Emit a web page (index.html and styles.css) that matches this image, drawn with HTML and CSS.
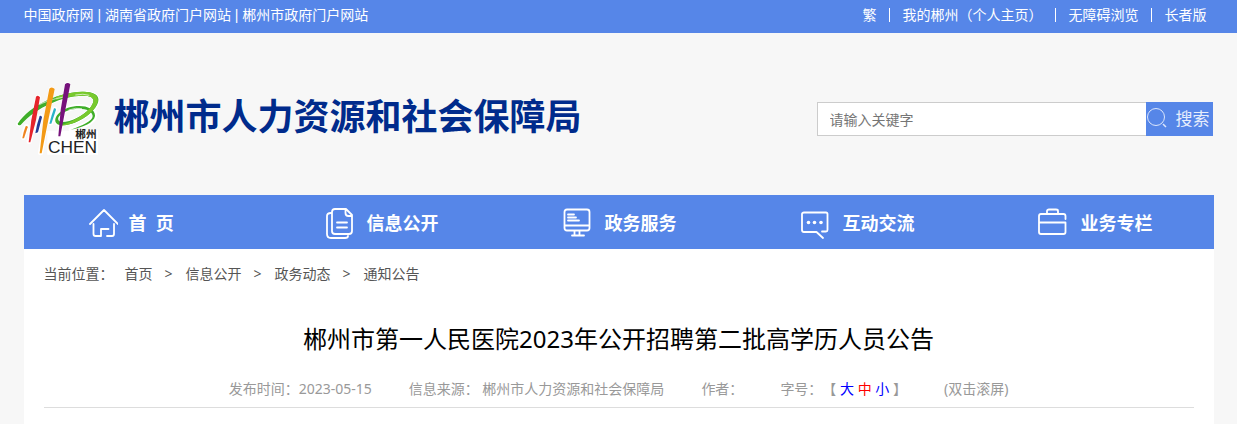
FILE: index.html
```html
<!doctype html>
<html lang="zh-CN">
<head>
    <meta charset="UTF-8">
    <title>郴州市第一人民医院2023年公开招聘第二批高学历人员公告</title>
    <link rel="stylesheet" href="styles.css">
</head>
<body>
<div class="topbar">
    <div class="wrap topbar-in">
        <div class="top-left">
            <a href="#">中国政府网</a> | <a href="#">湖南省政府门户网站</a> | <a href="#">郴州市政府门户网站</a>
        </div>
        <div class="top-right">
            <a href="#">繁</a><i></i><a href="#">我的郴州（个人主页）</a><i></i><a href="#">无障碍浏览</a><i></i><a href="#">长者版</a>
        </div>
    </div>
</div>

<div class="wrap header">
    <a class="logo" href="#">
        <svg class="logo-img" viewBox="48 33 252 228" role="img" aria-label="郴州">
            <!-- white edge -->
            <g fill="none" stroke="#fff" stroke-width="16" stroke-linecap="round" stroke-linejoin="round">
                <path d="M57 162C95 112 190 72 250 70C296 70 302 92 276 120C252 146 205 164 178 160C160 156 172 128 205 116C240 104 284 112 284 136C282 154 250 170 214 178"/>
                <path d="M114 82L88 214M154 58L122 248M202 44L178 194M122 140L110 184M164 118L152 158M79 170L70 202"/>
            </g>
            <rect x="142" y="182" width="152" height="72" fill="#fff"/>
            <path fill="#3fae2a" d="M53 161C90 104 180 66 246 65C298 64 308 88 280 120C256 148 208 170 180 165C154 160 164 128 204 113C242 101 286 110 285 138C282 158 250 172 212 179C246 167 278 154 278 138C277 118 240 110 206 121C174 132 166 152 184 156C208 158 250 138 268 116C290 90 282 76 246 77C190 78 110 110 62 165Q54 168 53 161Z"/>
            <path fill="#78c92d" d="M168 80C210 66 250 62 272 68C308 78 294 108 268 132C244 152 206 168 182 166C208 158 250 138 268 116C290 90 282 76 246 77C220 78 190 82 168 90Z"/>
            <path fill="none" stroke="#fff" stroke-width="2" d="M118 104C146 90 174 84 198 80M226 75Q250 70 268 76M206 120Q228 112 246 116"/>
            <path fill="#e5242b" d="M108 80Q114 74 120 82L108 150L91 217L86 217L94 150Z"/>
            <path fill="#f39a16" d="M148 56Q156 48 164 57L145 150L125 250L119 250L130 150Z"/>
            <path fill="#76127b" d="M195 43Q203 35 211 43L194 130L181 199L175 199L182 120Z"/>
            <path fill="#233b96" d="M119 138Q125 136 126 142L114 187L106 190L111 164Z"/>
            <path fill="#29b3c9" d="M162 115Q168 113 168 119L154 161L148 161L155 136Z"/>
            <path fill="#ef8421" d="M77 169Q83 166 83 172L72 205L67 205L71 186Z"/>
            <text class="logo-cn" x="226" y="204">郴州</text>
            <text class="logo-en" x="144" y="249">CHEN</text>
        </svg>
        <span class="logo-name">郴州市人力资源和社会保障局</span>
    </a>
    <form class="search">
        <input type="text" placeholder="请输入关键字" aria-label="请输入关键字">
        <button type="button">
            <svg width="22" height="22" viewBox="0 0 22 22" fill="none" stroke="#dce6fb">
                <circle cx="9" cy="9" r="8.5"/>
                <path d="M16 16L19 19" stroke-width="1.5"/>
            </svg>
            搜索
        </button>
    </form>
</div>

<div class="wrap nav">
    <a href="#">
        <svg viewBox="0 0 32 32"><path d="M4 17L18 3L32 17M7.500 17V27Q7.500 29 9.500 29H15V22H22.500M21 29H26Q28 29 28 27V17"/></svg>
        首&nbsp; 页
    </a>
    <a href="#">
        <svg viewBox="0 0 32 32"><path d="M11 2H22L28 8V24Q28 27 25 27H11Q8 27 8 24V5Q8 2 11 2ZM21.500 2V6Q21.500 9 24.500 9H28M7 6Q3 6 3 9V27Q3 31 7 31H21Q24 31 24 29M13 15.500H23M13 20.500H23"/></svg>
        信息公开
    </a>
    <a href="#">
        <svg viewBox="0 0 32 32"><path d="M5 2.500H25Q27.500 2.500 27.500 5V21Q27.500 23.500 25 23.500H5Q2.500 23.500 2.500 21V5Q2.500 2.500 5 2.500ZM2.500 18.500H27.500M6 7.500H12M6 10.500H14M6 13.500H17M12.500 24V28M17.500 24V28M10 28.500H22"/></svg>
        政务服务
    </a>
    <a href="#">
        <svg viewBox="0 0 32 32"><path d="M22 24.500H26Q27.500 24.500 27.500 23V7Q27.500 5.500 26 5.500H4Q2 5.500 2 7V23Q2 25 4 25H16.500L23 31"/><g fill="#fff" stroke="none"><circle cx="8.500" cy="15.500" r="1.800"/><circle cx="14.500" cy="15.500" r="1.800"/><circle cx="21" cy="15.500" r="1.800"/></g></svg>
        互动交流
    </a>
    <a href="#">
        <svg viewBox="0 0 32 32"><path d="M27.500 12V9Q27.500 7 25.500 7H3Q1 7 1 9V25Q1 27 3 27H25.500Q27.500 27 27.500 25V15.500H1M9 7V4Q9 2.500 11 2.500H18Q20 2.500 20 4V7"/></svg>
        业务专栏
    </a>
</div>

<div class="wrap main">
    <div class="position">
        <span class="now">当前位置：</span>
        <a href="#">首页</a>&gt;<a href="#">信息公开</a>&gt;<a href="#">政务动态</a>&gt;<a href="#">通知公告</a>
    </div>
    <h1 class="title">郴州市第一人民医院2023年公开招聘第二批高学历人员公告</h1>
    <div class="info">
        <span>发布时间：2023-05-15</span>
        <span>信息来源： 郴州市人力资源和社会保障局</span>
        <span>作者：</span>
        <span>字号：【 <a href="#">大</a> <a class="on" href="#">中</a> <a href="#">小</a> 】</span>
        <span>(双击滚屏)</span>
    </div>
</div>
</body>
</html>
```
FILE: styles.css
```css
*{
    box-sizing: border-box;
}
body{
    margin: 0;
    min-height: 100vh;
    display: flex;
    flex-direction: column;
    background: #f7f7f7;
    font: 14px/20px "Noto Sans", "Noto Sans CJK SC", sans-serif;
    color: #555;
}
a{
    color: inherit;
    text-decoration: none;
}
.wrap{
    width: 100%;
    max-width: 1190px;
    margin: 0 auto;
}

/* top */
.topbar{
    background: #5686e8;
    color: #fff;
}
.topbar-in{
    display: flex;
    justify-content: space-between;
    line-height: 30px;
    padding-bottom: 3px;
}
.top-left{
    font-family: "Liberation Sans", "Noto Sans CJK SC", sans-serif;
}
.top-right{
    display: flex;
    align-items: center;
    padding-right: 7px;
}
.top-right i{
    width: 1px;
    height: 14px;
    margin: 0 13px 0 12px;
    background: #fff;
}

/* header */
.header{
    display: flex;
    justify-content: space-between;
    align-items: center;
    padding: 48px 0 38px;
}
.logo{
    display: flex;
    align-items: center;
    gap: 14px;
    margin-left: -8px;
}
.logo-img{
    width: 84px;
    height: 76px;
}
.logo-cn{
    font: bold 32px "Noto Sans CJK SC", sans-serif;
    fill: #222;
}
.logo-en{
    font: 52px "Liberation Sans", sans-serif;
    fill: #222;
}
.logo-name{
    font-size: 36px;
    line-height: 48px;
    padding-bottom: 4px;
    font-weight: bold;
    color: #002b8c;
}
.search{
    display: flex;
    width: 396px;
    margin-right: 1px;
}
.search input{
    flex: 1;
    min-width: 0;
    height: 34px;
    padding: 0 12px;
    border: 1px solid #ccc;
    border-right: 0;
    background: #fff;
    font: inherit;
}
.search input::placeholder{
    color: #757575;
}
.search button{
    display: flex;
    align-items: center;
    gap: 7px;
    width: 67px;
    height: 34px;
    padding: 0 0 0 1px;
    border: 0;
    background: #5686e8;
    color: #e6edfc;
    font: inherit;
    font-size: 17px;
    white-space: nowrap;
}

/* nav */
.nav{
    display: grid;
    grid-template-columns: repeat(5, 1fr);
    background: #5686e8;
}
.nav a{
    display: flex;
    align-items: center;
    gap: 11px;
    height: 54px;
    padding: 2px 0 0 62px;
    color: #fff;
    font-size: 18px;
    font-weight: bold;
}
.nav svg{
    width: 32px;
    height: 32px;
    fill: none;
    stroke: #fff;
    stroke-width: 1.8;
    stroke-linecap: round;
    stroke-linejoin: round;
}

/* article */
.main{
    flex: 1;
    padding: 0 20px;
    background: #fff;
}
.position{
    display: flex;
    line-height: 50px;
}
.position a{
    margin: 0 12px 0 13px;
}
.position .now + a{
    margin-left: 11px;
}
.title{
    margin: 20px 0 0;
    font-size: 24px;
    line-height: 40px;
    font-weight: normal;
    text-align: center;
    color: #000;
}
.info{
    display: flex;
    justify-content: center;
    gap: 37px;
    padding: 11px 0 0;
    line-height: 37px;
    border-bottom: 1px solid #ddd;
    color: #999;
    text-spacing-trim: space-all;
}
.info a{
    color: #00f;
}
.info a.on{
    color: #f00;
}
```
